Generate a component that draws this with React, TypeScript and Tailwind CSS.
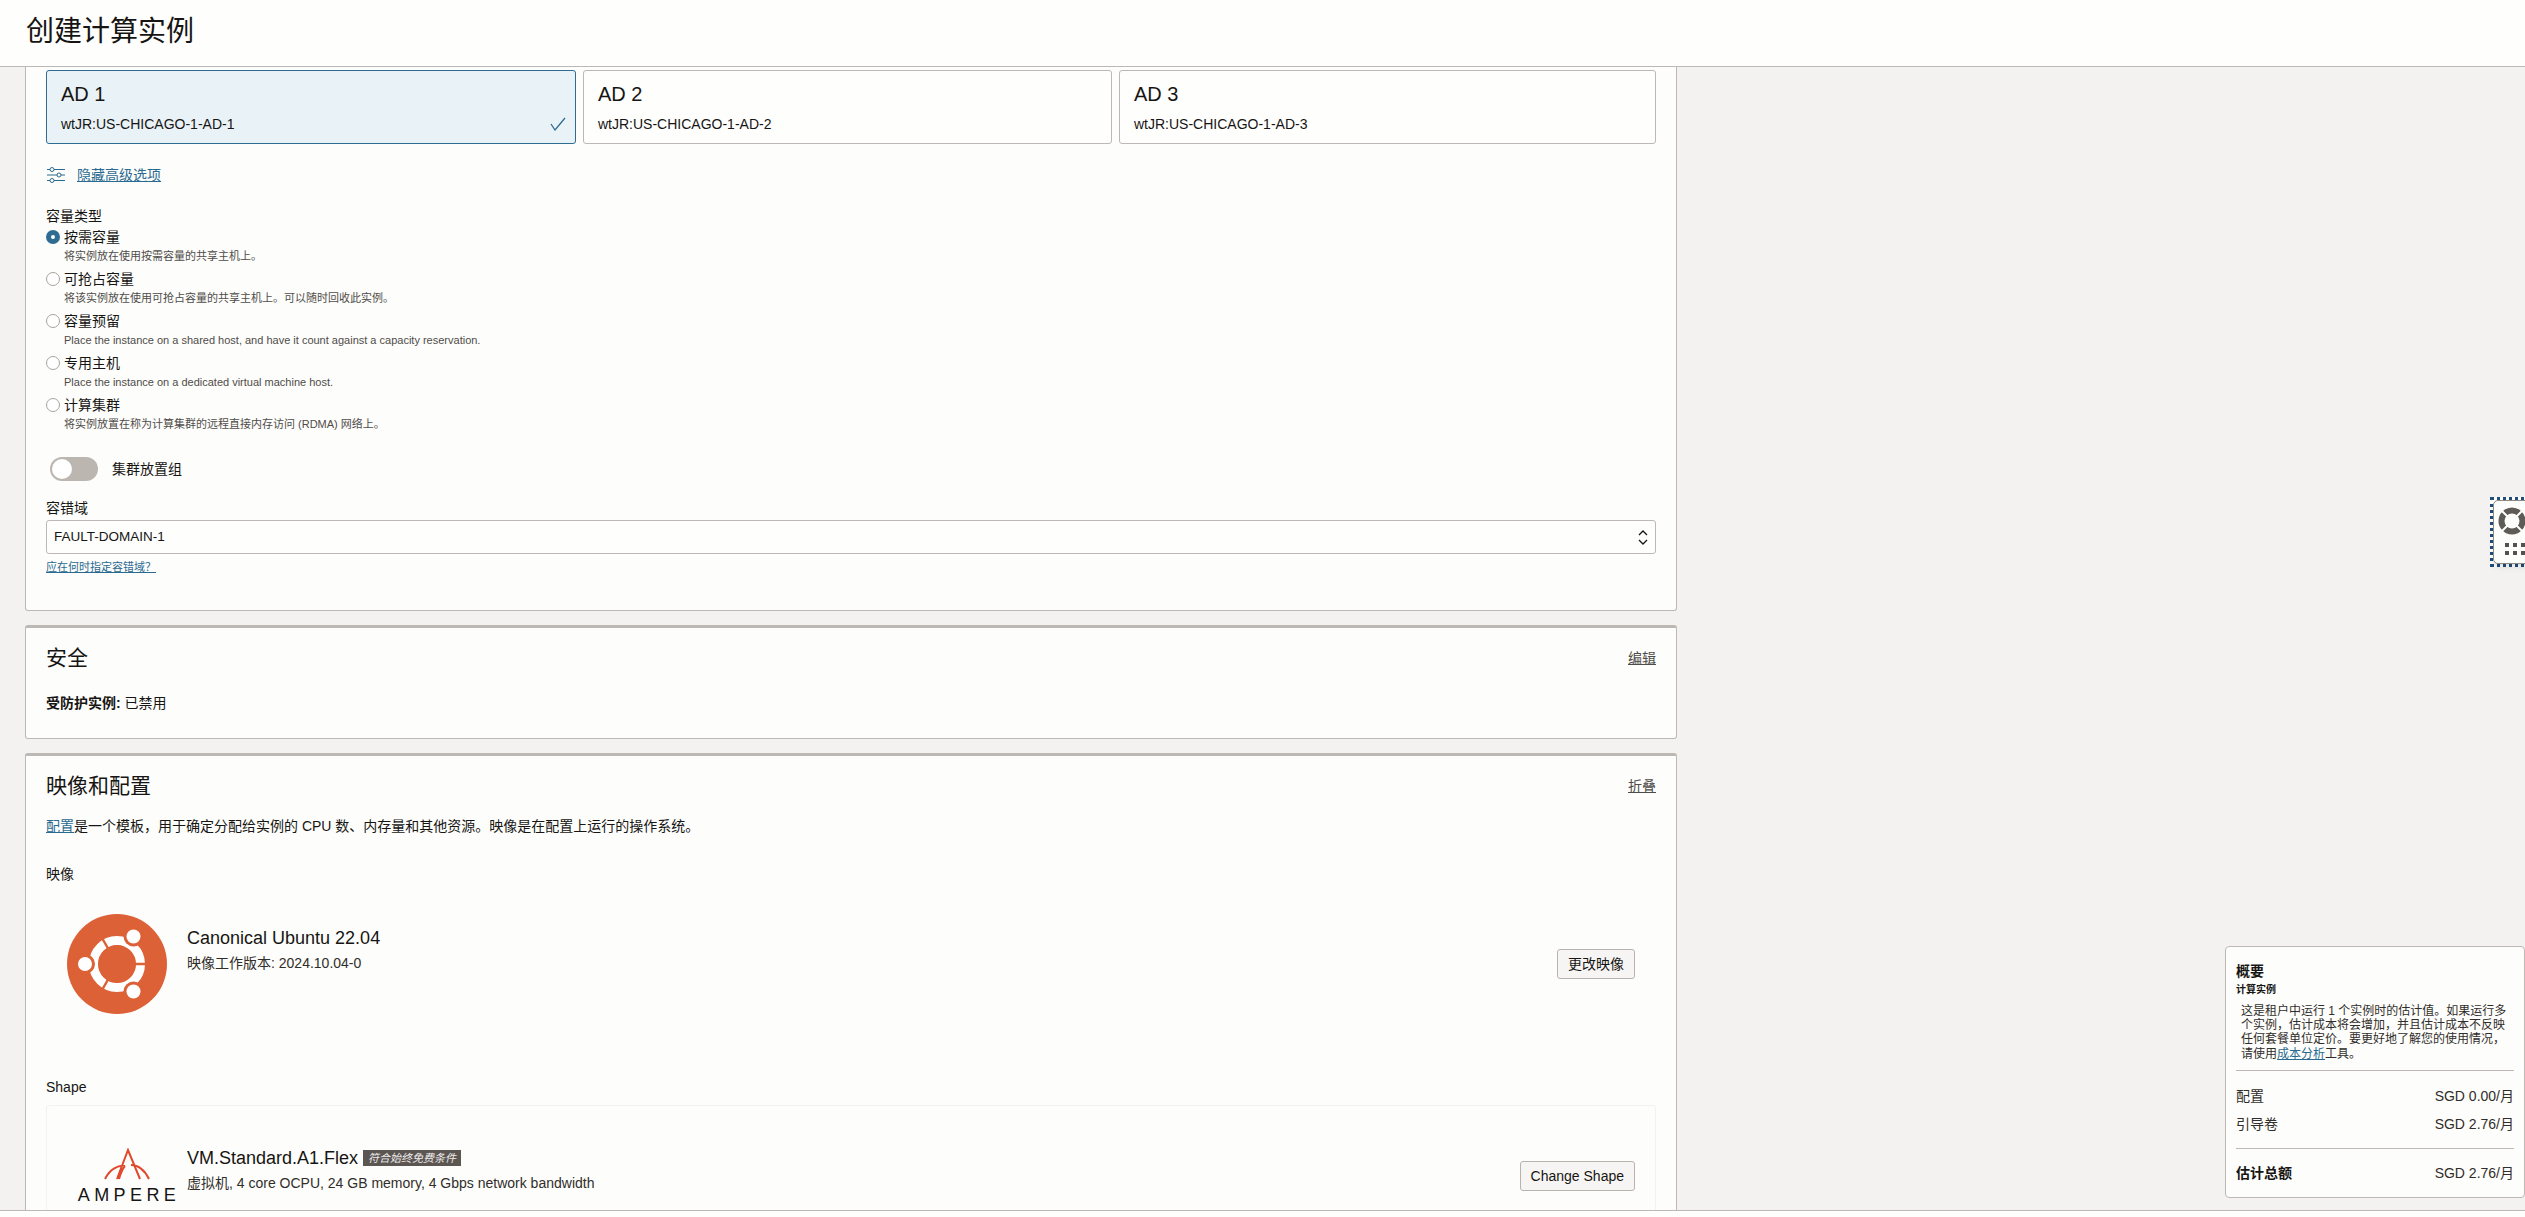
const capacityTypes = [
  { label: '按需容量', desc: '将实例放在使用按需容量的共享主机上。', checked: true },
  { label: '可抢占容量', desc: '将该实例放在使用可抢占容量的共享主机上。可以随时回收此实例。', checked: false },
  { label: '容量预留', desc: 'Place the instance on a shared host, and have it count against a capacity reservation.', checked: false },
  { label: '专用主机', desc: 'Place the instance on a dedicated virtual machine host.', checked: false },
  { label: '计算集群', desc: '将实例放置在称为计算集群的远程直接内存访问 (RDMA) 网络上。', checked: false },
];

const ads = [
  { name: 'AD 1', id: 'wtJR:US-CHICAGO-1-AD-1', selected: true, width: 'w-[530px]' },
  { name: 'AD 2', id: 'wtJR:US-CHICAGO-1-AD-2', selected: false, width: 'w-[529px]' },
  { name: 'AD 3', id: 'wtJR:US-CHICAGO-1-AD-3', selected: false, width: 'flex-1' },
];

const UbuntuLogo = () => (
  <svg width="100" height="100" viewBox="0 0 100 100">
    <circle cx="50" cy="50" r="50" fill="#dd6136" />
    <circle cx="50" cy="50" r="23.5" fill="none" stroke="#fff" strokeWidth="9" />
    <path d="M50 50 L80 50 M50 50 L35 76 M50 50 L35 24" stroke="#dd6136" strokeWidth="2.5" />
    <circle cx="50" cy="50" r="18.5" fill="#dd6136" />
    <circle cx="66.5" cy="22.5" r="10" fill="#dd6136" />
    <circle cx="66.5" cy="77.5" r="10" fill="#dd6136" />
    <circle cx="18" cy="50" r="10" fill="#dd6136" />
    <circle cx="66.5" cy="22.5" r="7" fill="#fff" />
    <circle cx="66.5" cy="77.5" r="7" fill="#fff" />
    <circle cx="18" cy="50" r="7" fill="#fff" />
  </svg>
);

const AmpereLogo = () => (
  <div className="flex flex-col items-center w-[100px]">
    <svg width="46" height="32" viewBox="0 0 46 32" fill="none" stroke="#e0492b" strokeWidth="2">
      <path d="M13 31 L24 2 L36 31 M45 31 C40 21 33 17 27 17 M1 31 C6 21 14 17 21 18 M15 31 C17 24 19 20 21 18" />
    </svg>
    <span className="mt-[7px] text-[18px] leading-[16px] tracking-[4.4px] mr-[-4px] text-[#161513] whitespace-nowrap">AMPERE</span>
  </div>
);

const SectionLink = ({ children }: { children: string }) => (
  <a href="#" className="text-[14px] leading-[20px] text-[#4f4c49] underline">{children}</a>
);

const Btn = ({ children }: { children: string }) => (
  <button className="h-[30px] px-[10px] bg-[#f6f5f3] border border-[#b9b3ad] rounded-[3px] text-[14px] text-[#161513] whitespace-nowrap">
    {children}
  </button>
);

export default function App() {
  return (
    <div className="relative h-screen overflow-hidden flex flex-col bg-[#f3f2f1] text-[#161513] [font-family:'Liberation_Sans','Noto_Sans_CJK_SC',sans-serif]">
      <header className="h-[67px] shrink-0 bg-[#fefefd] border-b border-[#bdb8b3] flex items-center pl-[26px] pb-[2px]">
        <h1 className="text-[28px] leading-[36px]">创建计算实例</h1>
      </header>

      <main className="flex-1 overflow-hidden pl-[25px]">
        <div className="w-[1652px]">
          {/* 可用性域 */}
          <section className="bg-[#fdfdfb] border-x border-b border-[#bdb8b3] rounded-b-[3px] px-[20px] pt-[3px] pb-[35px]">
            <div className="flex gap-[7px]">
              {ads.map((ad) => (
                <div
                  key={ad.name}
                  className={`${ad.width} h-[74px] rounded-[3px] border pl-[14px] pr-[9px] pt-[11px] ${ad.selected ? 'bg-[#e9f2f6] border-[#2f6c92]' : 'bg-[#fefefd] border-[#bdb8b3]'}`}
                >
                  <div className="text-[20px] leading-[24px]">{ad.name}</div>
                  <div className="flex items-center justify-between mt-[8px] h-[20px]">
                    <span className="text-[14px] leading-[20px]">{ad.id}</span>
                    {ad.selected && (
                      <svg width="16" height="14" viewBox="0 0 16 14" fill="none" stroke="#2f6c92" strokeWidth="1.3">
                        <path d="M1 7 L5 13 L15 1" />
                      </svg>
                    )}
                  </div>
                </div>
              ))}
            </div>

            <div className="flex items-center h-[20px] mt-[21px] text-[#2a6a90]">
              <svg width="18" height="16" viewBox="0 0 18 16" fill="none" stroke="#2a6a90" strokeWidth="1" className="ml-[1px]">
                <path d="M0 2.5 H3 M7 2.5 H18 M0 8 H10 M14 8 H18 M0 13.5 H3 M7 13.5 H18" />
                <circle cx="5" cy="2.5" r="2" />
                <circle cx="12" cy="8" r="2" />
                <circle cx="5" cy="13.5" r="2" />
              </svg>
              <a href="#" className="ml-[12px] text-[14px] leading-[20px] underline">隐藏高级选项</a>
            </div>

            <div className="mt-[21px] h-[20px] text-[14px] leading-[20px]">容量类型</div>
            <div className="mt-[2px]">
              {capacityTypes.map((item) => (
                <div key={item.label} className="h-[42px]">
                  <div className="flex items-center h-[18px]">
                    {item.checked ? (
                      <span className="w-[14px] h-[14px] rounded-full bg-[#2f6c92] flex items-center justify-center">
                        <span className="w-[4px] h-[4px] rounded-full bg-white" />
                      </span>
                    ) : (
                      <span className="w-[14px] h-[14px] rounded-full bg-white border border-[#a9a39d]" />
                    )}
                    <span className="ml-[4px] text-[14px] leading-[18px]">{item.label}</span>
                  </div>
                  <div className="ml-[18px] mt-[3px] text-[11px] leading-[14px] text-[#4f4c49]">{item.desc}</div>
                </div>
              ))}
            </div>

            <div className="flex items-center mt-[19px] ml-[4px]">
              <div className="w-[48px] h-[24px] rounded-full bg-[#bcb6b1] p-[2px]">
                <div className="w-[20px] h-[20px] rounded-full bg-white" />
              </div>
              <span className="ml-[14px] text-[14px]">集群放置组</span>
            </div>

            <div className="mt-[17px] h-[20px] text-[14px] leading-[20px]">容错域</div>
            <div className="mt-[2px] h-[34px] bg-[#fefefd] border border-[#bdb8b3] rounded-[3px] flex items-center justify-between pl-[7px] pr-[7px]">
              <span className="text-[13.5px]">FAULT-DOMAIN-1</span>
              <svg width="10" height="15" viewBox="0 0 10 15" fill="none" stroke="#161513" strokeWidth="1.3">
                <path d="M1 5 L5 1 L9 5 M1 10 L5 14 L9 10" />
              </svg>
            </div>
            <a href="#" className="block mt-[5px] h-[16px] text-[11px] leading-[16px] text-[#2a6a90] underline">应在何时指定容错域？</a>
          </section>

          {/* 安全 */}
          <section className="mt-[14px] bg-[#fdfdfb] border-x border-b border-t-[3px] border-[#bdb8b3] rounded-[3px] px-[20px] pt-[15px] pb-[25px]">
            <div className="flex items-center justify-between h-[30px]">
              <h2 className="text-[21px] leading-[30px]">安全</h2>
              <SectionLink>编辑</SectionLink>
            </div>
            <p className="mt-[20px] text-[14px] leading-[20px]"><b>受防护实例:</b> 已禁用</p>
          </section>

          {/* 映像和配置 */}
          <section className="mt-[14px] bg-[#fdfdfb] border-x border-t-[3px] border-[#bdb8b3] rounded-t-[3px] px-[20px] pt-[15px]">
            <div className="flex items-center justify-between h-[30px]">
              <h2 className="text-[21px] leading-[30px]">映像和配置</h2>
              <SectionLink>折叠</SectionLink>
            </div>
            <p className="mt-[15px] text-[14px] leading-[20px]">
              <a href="#" className="text-[#2a6a90] underline">配置</a>是一个模板，用于确定分配给实例的 CPU 数、内存量和其他资源。映像是在配置上运行的操作系统。
            </p>

            <div className="mt-[28px] h-[20px] text-[14px] leading-[20px]">映像</div>
            <div className="mt-[30px] flex items-center h-[100px] pl-[21px] pr-[21px]">
              <UbuntuLogo />
              <div className="ml-[20px] self-start mt-[12px]">
                <div className="text-[18px] leading-[24px]">Canonical Ubuntu 22.04</div>
                <div className="mt-[3px] text-[14px] leading-[20px] text-[#312d2a]">映像工作版本: 2024.10.04-0</div>
              </div>
              <div className="ml-auto"><Btn>更改映像</Btn></div>
            </div>

            <div className="mt-[63px] h-[20px] text-[14px] leading-[20px]">Shape</div>
            <div className="mt-[8px] h-[140px] border border-[#f4f2f0] rounded-[3px] flex items-start pt-[40px] pl-[30px] pr-[20px]">
              <div className="mt-[2px]"><AmpereLogo /></div>
              <div className="ml-[10px]">
                <div className="flex items-center h-[24px]">
                  <span className="text-[18px] leading-[24px]">VM.Standard.A1.Flex</span>
                  <span className="ml-[5px] h-[16px] px-[5px] bg-[#5c5653] text-[#eeeceb] italic text-[11px] leading-[16px]">符合始终免费条件</span>
                </div>
                <div className="mt-[3px] text-[14px] leading-[20px] text-[#312d2a]">虚拟机, 4 core OCPU, 24 GB memory, 4 Gbps network bandwidth</div>
              </div>
              <div className="ml-auto mt-[15px]"><Btn>Change Shape</Btn></div>
            </div>
          </section>
        </div>
      </main>

      <footer className="h-[7px] shrink-0 bg-[#fefefd] border-t border-[#bdb8b3]" />

      {/* 概要 */}
      <aside className="absolute top-[946px] right-0 w-[300px] h-[252px] bg-[#fdfdfb] border border-[#bdb8b3] rounded-[4px] pl-[10px] pr-[10px] pt-[14px]">
        <div className="text-[14px] leading-[20px] font-bold">概要</div>
        <div className="mt-[2px] text-[10px] leading-[14px] font-bold">计算实例</div>
        <p className="mt-[7px] ml-[5px] text-[12px] leading-[14.2px] text-[#312d2a]">
          这是租户中运行 1 个实例时的估计值。如果运行多个实例，估计成本将会增加，并且估计成本不反映任何套餐单位定价。要更好地了解您的使用情况，请使用<a href="#" className="text-[#2a6a90] underline">成本分析</a>工具。
        </p>
        <div className="mt-[9px] border-t border-[#bdb8b3]" />
        <div className="mt-[15px] flex justify-between text-[14px] leading-[20px] text-[#312d2a]"><span>配置</span><span>SGD 0.00/月</span></div>
        <div className="mt-[8px] flex justify-between text-[14px] leading-[20px] text-[#312d2a]"><span>引导卷</span><span>SGD 2.76/月</span></div>
        <div className="mt-[14px] border-t border-[#bdb8b3]" />
        <div className="mt-[14px] flex justify-between text-[14px] leading-[20px]"><b>估计总额</b><span className="text-[#312d2a]">SGD 2.76/月</span></div>
      </aside>

      {/* 帮助 */}
      <div className="absolute top-[497px] left-[2490px] w-[60px] h-[70px] border-[3px] border-dotted border-[#1f4e79] bg-white">
        <div className="w-full h-full bg-[#fdfdfb] border border-[#8f8a85] rounded-[5px] flex flex-col pl-[4px] pt-[6px] shadow-md">
          <svg width="28" height="28" viewBox="0 0 28 28">
            <circle cx="14" cy="14" r="10.5" fill="none" stroke="#5f5b57" strokeWidth="6" />
            <path d="M4 4 L9.5 9.5 M24 4 L18.5 9.5 M4 24 L9.5 18.5 M24 24 L18.5 18.5" stroke="#fff" strokeWidth="2" />
          </svg>
          <div className="mt-[8px] ml-[7px] grid grid-cols-[repeat(3,4px)] gap-x-[4px] gap-y-[4px]">
            {[0, 1, 2, 3, 4, 5].map((i) => (
              <span key={i} className="w-[4px] h-[4px] bg-[#55514e]" />
            ))}
          </div>
        </div>
      </div>
    </div>
  );
}
